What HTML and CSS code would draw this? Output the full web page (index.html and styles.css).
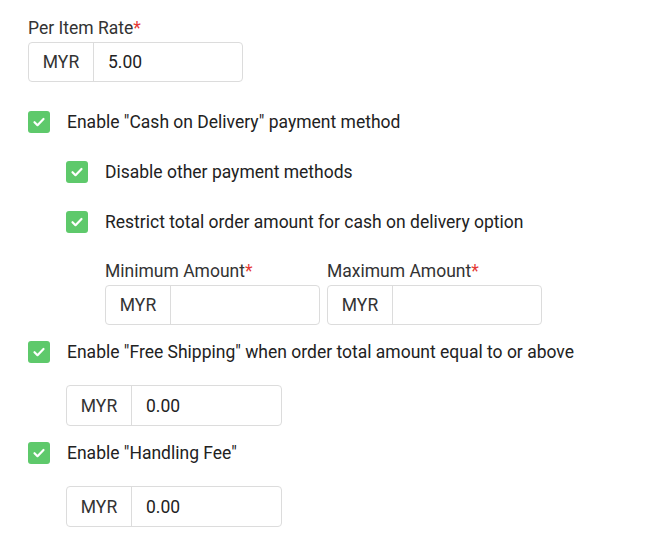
FILE: index.html
```html
<!DOCTYPE html>
<html>
<head>
<meta charset="utf-8">
<link rel="stylesheet" href="styles.css">
</head>
<body>
<div class="form">
  <div class="field">
    <div class="label">Per Item Rate<span class="req">*</span></div>
    <div class="group"><span class="addon">MYR</span><span class="value">5.00</span></div>
  </div>

  <div class="check first">
    <span class="box"><svg viewBox="0 0 22 22" width="22" height="22"><path d="M6.5 11.2l3 3 6-6.2" fill="none" stroke="#fff" stroke-width="2.2" stroke-linecap="round" stroke-linejoin="round"/></svg></span>
    <span class="text">Enable "Cash on Delivery" payment method</span>
  </div>

  <div class="indent">
    <div class="check">
      <span class="box"><svg viewBox="0 0 22 22" width="22" height="22"><path d="M6.5 11.2l3 3 6-6.2" fill="none" stroke="#fff" stroke-width="2.2" stroke-linecap="round" stroke-linejoin="round"/></svg></span>
      <span class="text">Disable other payment methods</span>
    </div>
    <div class="check">
      <span class="box"><svg viewBox="0 0 22 22" width="22" height="22"><path d="M6.5 11.2l3 3 6-6.2" fill="none" stroke="#fff" stroke-width="2.2" stroke-linecap="round" stroke-linejoin="round"/></svg></span>
      <span class="text">Restrict total order amount for cash on delivery option</span>
    </div>
    <div class="range">
      <div class="field">
        <div class="label">Minimum Amount<span class="req">*</span></div>
        <div class="group"><span class="addon">MYR</span><span class="value"></span></div>
      </div>
      <div class="field">
        <div class="label">Maximum Amount<span class="req">*</span></div>
        <div class="group"><span class="addon">MYR</span><span class="value"></span></div>
      </div>
    </div>
  </div>

  <div class="check after-range">
    <span class="box"><svg viewBox="0 0 22 22" width="22" height="22"><path d="M6.5 11.2l3 3 6-6.2" fill="none" stroke="#fff" stroke-width="2.2" stroke-linecap="round" stroke-linejoin="round"/></svg></span>
    <span class="text">Enable "Free Shipping" when order total amount equal to or above</span>
  </div>
  <div class="indent sub">
    <div class="group"><span class="addon">MYR</span><span class="value">0.00</span></div>
  </div>

  <div class="check after-sub">
    <span class="box"><svg viewBox="0 0 22 22" width="22" height="22"><path d="M6.5 11.2l3 3 6-6.2" fill="none" stroke="#fff" stroke-width="2.2" stroke-linecap="round" stroke-linejoin="round"/></svg></span>
    <span class="text">Enable "Handling Fee"</span>
  </div>
  <div class="indent sub">
    <div class="group"><span class="addon">MYR</span><span class="value">0.00</span></div>
  </div>
</div>
</body>
</html>
```
FILE: styles.css
```css
html, body {
  margin: 0;
  padding: 0;
  background: #fff;
}
body {
  font-family: Roboto, "Liberation Sans", sans-serif;
  font-size: 17.5px;
  color: #222;
}
.form {
  padding: 18px 0 0 28px;
}
.label {
  line-height: 20px;
  height: 20px;
  margin-bottom: 4px;
  color: #333;
}
.req {
  color: #e53935;
}
.group {
  display: flex;
  width: 215px;
  height: 40px;
  box-sizing: border-box;
  border: 1px solid #dcdcdc;
  border-radius: 4px;
}
.addon {
  width: 65px;
  box-sizing: border-box;
  border-right: 1px solid #dcdcdc;
  display: flex;
  align-items: center;
  justify-content: center;
  color: #333;
}
.value {
  flex: 1;
  display: flex;
  align-items: center;
  padding-left: 14px;
  color: #222;
}
.check {
  display: flex;
  align-items: center;
  height: 22px;
  margin-top: 28px;
}
.check.first {
  margin-top: 29px;
}
.check.after-range {
  margin-top: 16px;
}
.check.after-sub {
  margin-top: 16px;
}
.box {
  width: 22px;
  height: 22px;
  border-radius: 3px;
  background: #5ec96b;
  flex: none;
  display: block;
}
.box svg {
  display: block;
}
.text {
  margin-left: 17px;
  line-height: 22px;
}
.indent {
  padding-left: 38px;
}
.range {
  display: flex;
  gap: 7px;
  margin-top: 28px;
  padding-left: 39px;
}
.range .group {
  width: 215px;
}
.sub {
  margin-top: 22px;
}
.sub .group {
  width: 216px;
  height: 41px;
}
```
